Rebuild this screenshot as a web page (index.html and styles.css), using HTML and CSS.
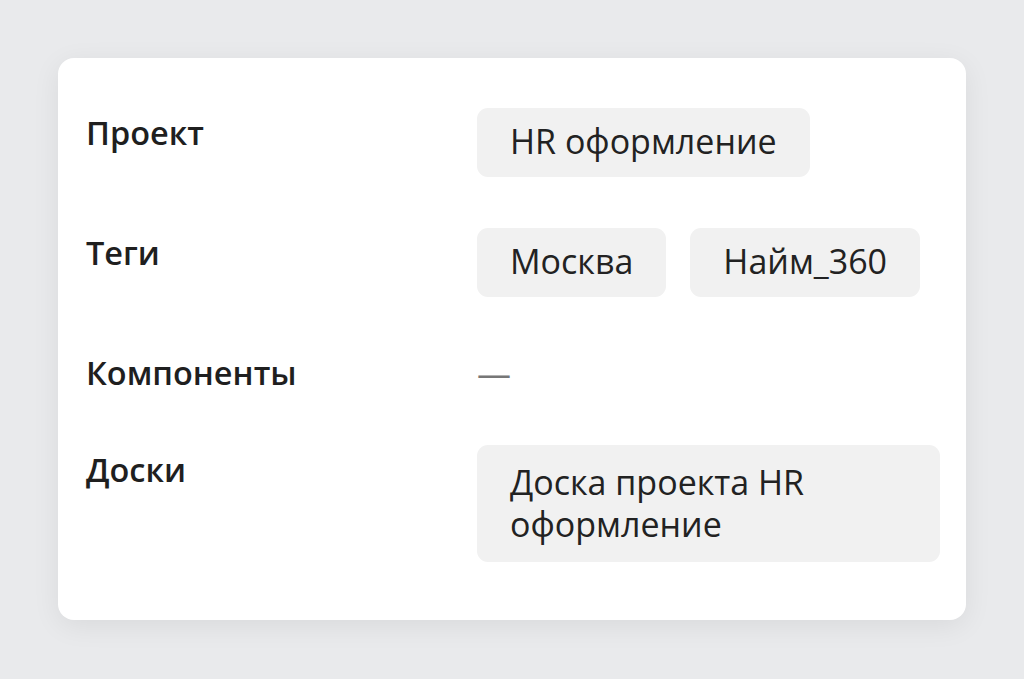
FILE: index.html
```html
<!DOCTYPE html>
<html lang="ru">
<head>
    <meta charset="UTF-8">
    <meta name="viewport" content="width=device-width, initial-scale=1.0">
    <title>Параметры задачи</title>
    <link rel="stylesheet" href="styles.css">
</head>
<body>
    <div class="card">
        <div class="row">
            <div class="label">Проект</div>
            <div class="value">
                <span class="chip">HR оформление</span>
            </div>
        </div>
        <div class="row">
            <div class="label">Теги</div>
            <div class="value">
                <span class="chip">Москва</span>
                <span class="chip">Найм_360</span>
            </div>
        </div>
        <div class="row">
            <div class="label">Компоненты</div>
            <div class="value">
                <span class="empty">—</span>
            </div>
        </div>
        <div class="row">
            <div class="label">Доски</div>
            <div class="value">
                <span class="chip chip-wide">Доска проекта HR оформление</span>
            </div>
        </div>
    </div>
</body>
</html>
```

FILE: styles.css
```css
* {
    margin: 0;
    padding: 0;
    box-sizing: border-box;
}
body {
    font-family: 'Open Sans', 'Noto Sans', sans-serif;
    background-color: #e9eaec;
    padding: 58px;
    color: #222;
}
.card {
    width: 908px;
    background-color: white;
    border-radius: 16px;
    padding: 50px 26px 58px 28px;
    box-shadow: 0 6px 28px rgba(0,0,0,0.07);
    display: flex;
    flex-direction: column;
    gap: 51px;
}
.row {
    display: grid;
    grid-template-columns: 391px 1fr;
    align-items: start;
}
.label {
    font-size: 32.5px;
    font-weight: 600;
    line-height: 42px;
    padding-top: 4px;
    color: #1f1f1f;
}
.value {
    display: flex;
    flex-wrap: wrap;
    gap: 24px;
    font-size: 34px;
    line-height: 42px;
}
.chip {
    background-color: #f1f1f1;
    border-radius: 11px;
    padding: 12px 33px 15px;
}
.chip-wide {
    padding: 16px 33px 17px;
}
.empty {
    color: #777;
    padding-top: 4px;
}
```
